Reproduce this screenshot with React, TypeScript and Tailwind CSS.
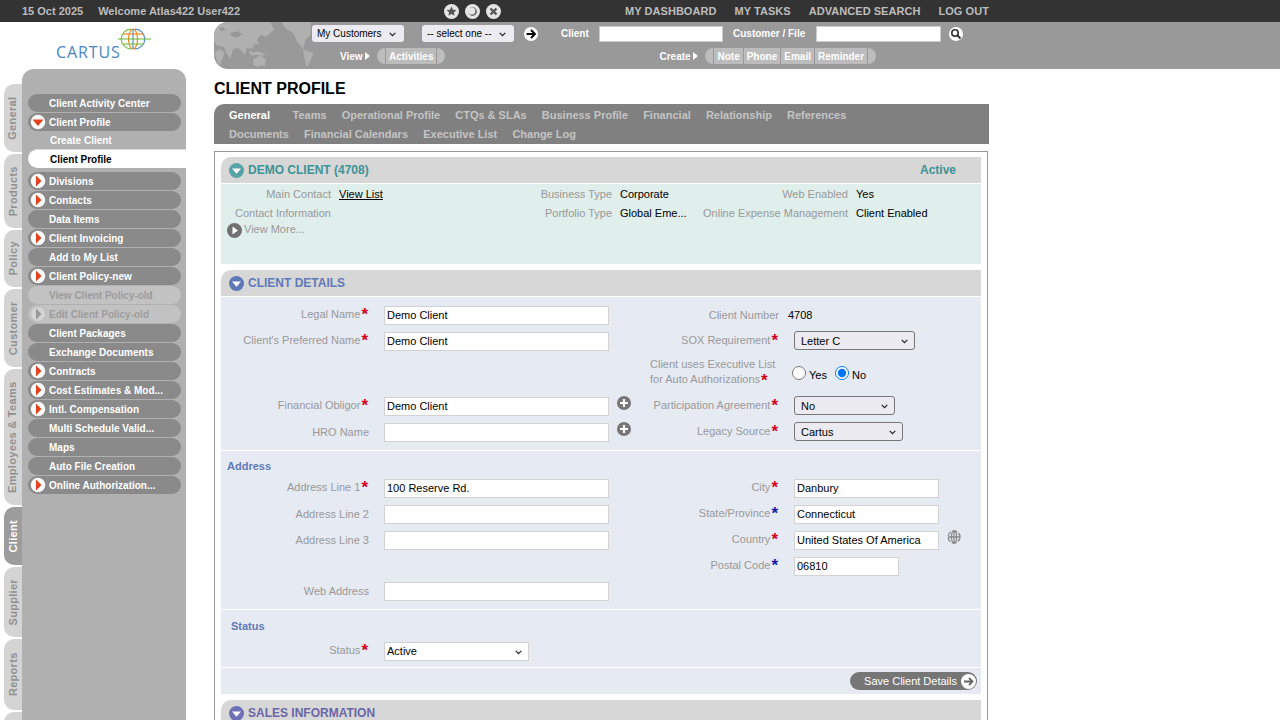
import React from "react";

const font = { fontFamily: '"Liberation Sans", Arial, sans-serif' };

function Tri({ down = false, gray = false }: { down?: boolean; gray?: boolean }) {
  return (
    <svg width="16" height="16" viewBox="0 0 16 16" className="shrink-0">
      <circle cx="8" cy="8" r="7.5" fill={gray ? "#d4d4d4" : "#fff"} stroke={gray ? "#aaa" : "#777"} strokeWidth="0.5" />
      {down ? <path d="M2.5 5.5h11L8 12z" fill="#e8401c" /> : <path d="M6 2.5v11L11.5 8z" fill={gray ? "#999" : "#e8401c"} />}
    </svg>
  );
}

function MenuItem({ label, icon, down, disabled }: { label: string; icon?: boolean; down?: boolean; disabled?: boolean }) {
  return (
    <div className={`h-[18px] w-[153px] rounded-full flex items-center pl-[2px] ${disabled ? "bg-[#c2c2c2]" : "bg-[#8a8a8a]"}`}>
      <div className="w-[19px] shrink-0 flex">{icon && <Tri down={down} gray={disabled} />}</div>
      <span className={`text-[10px] font-bold whitespace-nowrap ${disabled ? "text-[#9c9c9c]" : "text-white"}`}>{label}</span>
    </div>
  );
}

function VTab({ label, h, active }: { label: string; h: number; active?: boolean }) {
  return (
    <div
      style={{ height: h }}
      className={`w-[18px] shrink-0 rounded-l-[10px] flex items-center justify-center overflow-hidden ${active ? "bg-[#9c9c9c]" : "bg-[#d4d4d4]"}`}
    >
      <span className={`-rotate-90 whitespace-nowrap text-[11px] tracking-[0.3px] font-bold ${active ? "text-white" : "text-[#909090]"}`}>{label}</span>
    </div>
  );
}

function Sidebar() {
  const tabs: [string, number, boolean?][] = [
    ["General", 68],
    ["Products", 74],
    ["Policy", 57],
    ["Customer", 78],
    ["Employees & Teams", 136],
    ["Client", 58, true],
    ["Supplier", 70],
    ["Reports", 71],
    ["", 20],
  ];
  return (
    <div className="w-[214px] shrink-0 bg-white flex flex-col">
      <div className="h-[47px] w-[186px] relative flex items-end pl-[56px] shrink-0">
        <span className="text-[16px] leading-[15px] text-[#4a86c5] tracking-[0.9px] mb-[9px]" style={{ fontFamily: '"Open Sans", sans-serif' }}>CARTUS</span>
        <svg width="34" height="22" viewBox="0 0 34 22" className="absolute left-[117px] top-[6px]">
          <g fill="none" strokeWidth="1.2">
            <path d="M14 1.2A9.5 9.5 0 0 0 14 20.8" stroke="#7cc04a" />
            <path d="M18 1.2A9.5 9.5 0 0 1 18 20.8" stroke="#4b8fd0" />
            <ellipse cx="16" cy="11" rx="4.5" ry="9.8" stroke="#f08a24" />
            <path d="M16 1v20" stroke="#4b8fd0" />
            <path d="M6 6h20" stroke="#f08a24" />
            <path d="M1 11h33" stroke="#6bb52c" />
            <path d="M6 16h20" stroke="#7cc04a" />
          </g>
        </svg>
      </div>
      <div className="flex flex-1 min-h-0 pl-[4px]">
        <div className="w-[18px] pt-[15px] flex flex-col gap-[2px] overflow-hidden">
          {tabs.map(([l, h, a], i) => <VTab key={i} label={l} h={h} active={a} />)}
        </div>
        <div className="w-[164px] bg-[#b0b0b0] rounded-t-[12px] pt-[25px] pl-[6px] flex flex-col">
          <div className="flex flex-col gap-[1px]">
            <MenuItem label="Client Activity Center" />
            <MenuItem label="Client Profile" icon down />
          </div>
          <div className="h-[18px] pl-[22px] flex items-center">
            <span className="text-[10px] font-bold text-white">Create Client</span>
          </div>
          <div className="h-[19px] rounded-l-full bg-white border-t border-[#ddd] pl-[22px] flex items-center">
            <span className="text-[10px] font-bold text-black">Client Profile</span>
          </div>
          <div className="flex flex-col gap-[1px] mt-[4px]">
            <MenuItem label="Divisions" icon />
            <MenuItem label="Contacts" icon />
            <MenuItem label="Data Items" />
            <MenuItem label="Client Invoicing" icon />
            <MenuItem label="Add to My List" />
            <MenuItem label="Client Policy-new" icon />
            <MenuItem label="View Client Policy-old" disabled />
            <MenuItem label="Edit Client Policy-old" icon disabled />
            <MenuItem label="Client Packages" />
            <MenuItem label="Exchange Documents" />
            <MenuItem label="Contracts" icon />
            <MenuItem label="Cost Estimates & Mod..." icon />
            <MenuItem label="Intl. Compensation" icon />
            <MenuItem label="Multi Schedule Valid..." />
            <MenuItem label="Maps" />
            <MenuItem label="Auto File Creation" />
            <MenuItem label="Online Authorization..." icon />
          </div>
        </div>
      </div>
    </div>
  );
}

function CircleIcon({ children }: { children: React.ReactNode }) {
  return (
    <svg width="15" height="15" viewBox="0 0 15 15">
      <circle cx="7.5" cy="7.5" r="7.5" fill="#e4e4e4" />
      {children}
    </svg>
  );
}

function TopBar() {
  return (
    <div className="h-[22px] bg-[#333333] flex items-center text-[11px] font-bold text-[#bdbdbd] shrink-0">
      <div className="w-[444px] pl-[22px] flex gap-[15px]">
        <span>15 Oct 2025</span>
        <span>Welcome Atlas422 User422</span>
      </div>
      <div className="w-[181px] flex gap-[6px]">
        <CircleIcon><path d="M7.5 2.5l1.5 3.2 3.4.4-2.5 2.3.7 3.4-3.1-1.7-3.1 1.7.7-3.4-2.5-2.3 3.4-.4z" fill="#555" /></CircleIcon>
        <CircleIcon><circle cx="7.5" cy="7.5" r="4.4" fill="#666" /><circle cx="6.6" cy="6.9" r="3.7" fill="#e4e4e4" /></CircleIcon>
        <CircleIcon><path d="M4.5 4.5l6 6M10.5 4.5l-6 6" stroke="#555" strokeWidth="2.4" /></CircleIcon>
      </div>
      <div className="flex gap-[18px] tracking-[0.05px]">
        <span>MY DASHBOARD</span>
        <span>MY TASKS</span>
        <span>ADVANCED SEARCH</span>
        <span>LOG OUT</span>
      </div>
    </div>
  );
}

function Pills({ items }: { items: string[] }) {
  return (
    <div className="flex h-[16px] gap-[1px]">
      <div className="w-[8px] rounded-l-full bg-[#bcbcbc]" />
      {items.map((i) => (
        <div key={i} className="bg-[#bcbcbc] px-[3px] flex items-center text-[10px] font-bold text-white">{i}</div>
      ))}
      <div className="w-[8px] rounded-r-full bg-[#bcbcbc]" />
    </div>
  );
}

function Chevron({ right }: { right: number }) {
  return (
    <svg width="7" height="5" viewBox="0 0 7 5" style={{ right }} className="absolute top-1/2 -mt-[2px] pointer-events-none">
      <path d="M0.7 0.8L3.5 3.6 6.3 0.8" fill="none" stroke="#222" strokeWidth="1.2" />
    </svg>
  );
}

function HeaderSelect({ value }: { value: string }) {
  return (
    <div className="relative w-[92px] h-[17px]">
      <select defaultValue={value} className="appearance-none w-full h-full rounded-[3px] bg-[#ecebf1] text-[10px] text-black pl-[5px]">
        <option>{value}</option>
      </select>
      <Chevron right={8} />
    </div>
  );
}

function HeaderBar() {
  return (
    <div className="h-[47px] shrink-0 bg-[#999999] rounded-tl-[14px] rounded-bl-[14px] relative overflow-hidden">
      <svg width="120" height="52" viewBox="0 0 360 156" className="absolute left-[-4px] top-[-2px]">
        <g fill="#b0b0b0">
          <path d="M10 6H182L192 30 168 50 152 44 140 60 150 76 136 70 126 86 110 84 105 106 95 94 85 84 70 86 60 116 50 100 40 80 20 76 10 60z" />
          <path d="M14 96l16-8 14 10-8 22-8 18-8-16z" />
          <path d="M118 92l14 6 10-4 24 8-6 5-22-3-10 3-10-8z" />
          <path d="M130 118l20-12 18 12-3 20-14-2-8 5-13-6z" />
          <path d="M214 6H302V44L286 60 280 86 262 66 250 40 226 24z" />
          <path d="M280 88l30 12-10 26-10 16-8-32z" />
        </g>
        <g fill="#979797">
          <path d="M60 40l22-6 14 8-12 10-18-2z" />
          <path d="M25 25l14-4 8 8-12 5z" />
        </g>
      </svg>
      <div className="relative pl-[98px] pt-[3px] flex flex-col">
        <div className="flex items-center h-[17px]">
          <HeaderSelect value="My Customers" />
          <div className="ml-[18px]"><HeaderSelect value="-- select one --" /></div>
          <svg width="14" height="14" viewBox="0 0 14 14" className="ml-[10px]">
            <circle cx="7" cy="7" r="7" fill="#fff" />
            <path d="M2.5 7h8M7 3L11 7 7 11" stroke="#000" strokeWidth="1.9" fill="none" />
          </svg>
          <span className="ml-[23px] w-[38px] text-[10px] font-bold text-white">Client</span>
          <input className="w-[124px] h-[16px] bg-white border border-[#ccc]" />
          <span className="ml-[10px] w-[83px] text-[10px] font-bold text-white">Customer / File</span>
          <input className="w-[125px] h-[16px] bg-white border border-[#ccc]" />
          <svg width="14" height="14" viewBox="0 0 14 14" className="ml-[8px]">
            <circle cx="7" cy="7" r="7" fill="#fff" />
            <circle cx="6" cy="6" r="3.2" fill="none" stroke="#333" strokeWidth="1.6" />
            <path d="M8.3 8.3L11.5 11.5" stroke="#333" strokeWidth="2" />
          </svg>
        </div>
        <div className="flex items-center h-[16px] mt-[6px] text-[10px] font-bold text-white">
          <span className="ml-[28px] w-[37px] flex items-center gap-[1px]">View<svg width="5" height="8" viewBox="0 0 5 8" className="ml-[1px]"><path d="M0 0l5 4-5 4z" fill="#fff" /></svg></span>
          <Pills items={["Activities"]} />
          <span className="ml-[214px] w-[46px] flex items-center gap-[1px]">Create<svg width="5" height="8" viewBox="0 0 5 8" className="ml-[1px]"><path d="M0 0l5 4-5 4z" fill="#fff" /></svg></span>
          <Pills items={["Note", "Phone", "Email", "Reminder"]} />
        </div>
      </div>
    </div>
  );
}

function Star({ blue }: { blue?: boolean }) {
  return <span className={`text-[17px] font-bold leading-[11px] h-[11px] ml-[1px] mt-[3px] ${blue ? "text-[#1a1a9e]" : "text-[#d4001a]"}`}>*</span>;
}

function Label({ text, req, width, blue }: { text: string; req?: boolean; width: number; blue?: boolean }) {
  return (
    <div style={{ width }} className={`shrink-0 flex justify-end items-start text-[#999] ${req ? "pr-[1px] -translate-y-[1px]" : ""}`}>
      <span>{text}</span>
      {req && <Star blue={blue} />}
    </div>
  );
}

function TextInput({ value, w = 225 }: { value?: string; w?: number }) {
  return (
    <input
      readOnly
      value={value ?? ""}
      style={{ width: w }}
      className="h-[19px] shrink-0 bg-white border border-[#d2d2d2] px-[2px] pb-[1px] text-[11px] text-black"
    />
  );
}

function Sel({ value, w, white }: { value: string; w: number; white?: boolean }) {
  return (
    <div style={{ width: w }} className={`relative h-[19px] shrink-0 ${white ? "" : "-translate-y-px"}`}>
      <select
        defaultValue={value}
        className={`appearance-none w-full h-full text-[11px] text-black ${white ? "bg-white border border-[#d2d2d2] pl-[2px]" : "bg-[#ecebf1] border border-[#777] rounded-[3px] pl-[6px] pt-[1px]"}`}
      >
        <option>{value}</option>
      </select>
      <Chevron right={7} />
    </div>
  );
}

function Plus() {
  return (
    <svg width="14" height="14" viewBox="0 0 14 14" className="ml-[8px] -mt-[7px] shrink-0">
      <circle cx="7" cy="7" r="7" fill="#777" />
      <path d="M7 3v8M3 7h8" stroke="#fff" strokeWidth="2.2" />
    </svg>
  );
}

function SectionHeader({ title, color, icon, right }: { title: string; color: string; icon: string; right?: string }) {
  return (
    <div className="h-[26px] bg-[#d7d7d7] rounded-tl-[10px] flex items-center pl-[8px] pr-[25px] shrink-0">
      <svg width="15" height="15" viewBox="0 0 15 15" className="shrink-0">
        <circle cx="7.5" cy="7.5" r="7.5" fill={icon} />
        <path d="M3 5.5h9L7.5 10.8z" fill="#fff" />
      </svg>
      <span style={{ color }} className="ml-[4px] text-[12px] font-bold flex-1">{title}</span>
      {right && <span style={{ color }} className="text-[12px] font-bold">{right}</span>}
    </div>
  );
}

function Row({ left, right, mt = 7 }: { left: React.ReactNode; right: React.ReactNode; mt?: number }) {
  return (
    <div style={{ marginTop: mt }} className="flex items-center h-[19px]">
      <div className="w-[410px] shrink-0 flex items-center">{left}</div>
      <div className="flex items-center">{right}</div>
    </div>
  );
}

function LeftField({ label, req, value, plus }: { label?: string; req?: boolean; value?: string; plus?: boolean }) {
  return (
    <>
      <Label text={label ?? ""} req={req} width={148} />
      <div className="ml-[15px]"><TextInput value={value} /></div>
      {plus && <Plus />}
    </>
  );
}

function RightField({ label, req, blue, children }: { label: string; req?: boolean; blue?: boolean; children: React.ReactNode }) {
  return (
    <>
      <Label text={label} req={req} blue={blue} width={148} />
      <div className="ml-[15px] flex">{children}</div>
    </>
  );
}

function SummaryCell({ label, value, lw, vw }: { label: string; value: React.ReactNode; lw: number; vw?: number }) {
  return (
    <>
      <div style={{ width: lw }} className="shrink-0 flex justify-end whitespace-nowrap text-[#999]">{label}</div>
      <div style={{ width: vw }} className="pl-[8px] text-black whitespace-nowrap">{value}</div>
    </>
  );
}

function Content() {
  return (
    <div className="border border-[#999] w-[774px] px-[6px] pt-[5px] flex flex-col gap-[6px] text-[11px]">
      <div>
        <SectionHeader title="DEMO CLIENT (4708)" color="#3d9396" icon="#58a3a5" right="Active" />
        <div className="mt-px h-[80px] bg-[#e0eeec] pt-px">
          <div className="flex h-[19px] items-center">
            <SummaryCell lw={110} vw={173} label="Main Contact" value={<span className="underline">View List</span>} />
            <SummaryCell lw={108} vw={128} label="Business Type" value="Corporate" />
            <SummaryCell lw={108} label="Web Enabled" value="Yes" />
          </div>
          <div className="flex h-[19px] items-center">
            <SummaryCell lw={110} vw={173} label="Contact Information" value="" />
            <SummaryCell lw={108} vw={128} label="Portfolio Type" value="Global Eme..." />
            <SummaryCell lw={108} label="Online Expense Management" value="Client Enabled" />
          </div>
          <div className="flex items-center pl-[6px] text-[#999] -mt-[1px]">
            <svg width="15" height="15" viewBox="0 0 15 15"><circle cx="7.5" cy="7.5" r="7.5" fill="#707070" /><path d="M5.5 3.5v8l5.5-4z" fill="#fff" /></svg>
            <span className="ml-[2px] -translate-y-[1px]">View More...</span>
          </div>
        </div>
      </div>

      <div className="flex flex-col">
        <SectionHeader title="CLIENT DETAILS" color="#5f7ab9" icon="#5f78b8" />
        <div className="mt-px bg-[#e6eaf3] h-[153px] pt-[2px]">
          <Row
            left={<LeftField label="Legal Name" req value="Demo Client" />}
            right={<RightField label="Client Number"><span className="-ml-[6px] text-black">4708</span></RightField>}
          />
          <Row
            left={<LeftField label="Client's Preferred Name" req value="Demo Client" />}
            right={<RightField label="SOX Requirement" req><Sel value="Letter C" w={121} /></RightField>}
          />
          <div className="flex h-[31px] mt-[6px]">
            <div className="w-[410px]" />
            <div className="w-[148px] pl-[19px] leading-[15px] text-[#999]">
              Client uses Executive List<br />
              <span className="inline-flex items-start">for Auto Authorizations<Star /></span>
            </div>
            <div className="flex items-center ml-[13px] text-black">
              <input type="radio" name="exec" className="w-[14px] h-[14px] mt-[1px]" />
              <span className="ml-[3px] mr-[8px] mt-[5px]">Yes</span>
              <input type="radio" name="exec" defaultChecked className="w-[14px] h-[14px] mt-[1px]" />
              <span className="ml-[3px] mt-[5px]">No</span>
            </div>
          </div>
          <Row
            mt={9}
            left={<LeftField label="Financial Obligor" req value="Demo Client" plus />}
            right={<RightField label="Participation Agreement" req><Sel value="No" w={101} /></RightField>}
          />
          <Row
            left={<LeftField label="HRO Name" plus />}
            right={<RightField label="Legacy Source" req><Sel value="Cartus" w={109} /></RightField>}
          />
        </div>

        <div className="mt-px bg-[#e6eaf3] h-[158px]">
          <div className="h-[28px] pl-[6px] pt-[7px] font-bold text-[#5f7ab9]">Address</div>
          <Row
            mt={0}
            left={<LeftField label="Address Line 1" req value="100 Reserve Rd." />}
            right={<RightField label="City" req><TextInput value="Danbury" w={145} /></RightField>}
          />
          <Row
            left={<LeftField label="Address Line 2" />}
            right={<RightField label="State/Province" req blue><TextInput value="Connecticut" w={145} /></RightField>}
          />
          <Row
            left={<LeftField label="Address Line 3" />}
            right={
              <RightField label="Country" req>
                <TextInput value="United States Of America" w={145} />
                <svg width="14" height="14" viewBox="0 0 14 14" className="ml-[8px] -mt-[1px]">
                  <g fill="none" stroke="#888" strokeWidth="1.3">
                    <circle cx="7" cy="7" r="6" strokeDasharray="5 1.5" />
                    <ellipse cx="7" cy="7" rx="2.6" ry="6" />
                    <path d="M7 1v12M1 7h12" />
                  </g>
                </svg>
              </RightField>
            }
          />
          <Row left={<span />} right={<RightField label="Postal Code" req blue><TextInput value="06810" w={105} /></RightField>} />
          <Row mt={6} left={<LeftField label="Web Address" />} right={<span />} />
        </div>

        <div className="mt-px bg-[#e6eaf3] h-[57px]">
          <div className="h-[32px] pl-[10px] pt-[8px] font-bold text-[#5f7ab9]">Status</div>
          <Row mt={0} left={<><Label text="Status" req width={148} /><div className="ml-[15px]"><Sel value="Active" w={145} white /></div></>} right={<span />} />
        </div>

        <div className="mt-px bg-[#e6eaf3] h-[26px] flex items-center justify-end pr-[4px]">
          <button className="w-[127px] h-[18px] rounded-full bg-[#767676] flex items-center justify-end pr-[1px] text-white">
            <span className="mr-[4px]">Save Client Details</span>
            <svg width="15" height="15" viewBox="0 0 15 15">
              <circle cx="7.5" cy="7.5" r="7.5" fill="#fff" />
              <path d="M3 7.5h8M8 4l3.5 3.5L8 11" stroke="#666" strokeWidth="1.8" fill="none" />
            </svg>
          </button>
        </div>
      </div>

      <SectionHeader title="SALES INFORMATION" color="#6b66a8" icon="#6e70b8" />
    </div>
  );
}

function SubTabs() {
  const r1 = ["Teams", "Operational Profile", "CTQs & SLAs", "Business Profile", "Financial", "Relationship", "References"];
  const r2 = ["Documents", "Financial Calendars", "Executive List", "Change Log"];
  return (
    <div className="w-[775px] h-[40px] shrink-0 bg-[#808080] rounded-tl-[10px] pl-[15px] pt-[2px] text-[11px] font-bold text-[#c4c4c4] flex flex-col">
      <div className="h-[19px] flex items-center gap-[15.1px]">
        <span className="text-white mr-[7.5px]">General</span>
        {r1.map((t) => <span key={t}>{t}</span>)}
      </div>
      <div className="h-[19px] flex items-center gap-[15.2px]">
        {r2.map((t) => <span key={t}>{t}</span>)}
      </div>
    </div>
  );
}

export default function App() {
  return (
    <div style={font} className="h-screen w-full overflow-hidden bg-white flex flex-col text-[11px]">
      <TopBar />
      <div className="flex flex-1 min-h-0">
        <Sidebar />
        <div className="flex-1 min-w-0 flex flex-col">
          <HeaderBar />
          <h1 className="h-[35px] shrink-0 pt-[10px] text-[16px] leading-[20px] font-bold text-black">CLIENT PROFILE</h1>
          <SubTabs />
          <div className="mt-[7px] shrink-0"><Content /></div>
        </div>
      </div>
    </div>
  );
}
